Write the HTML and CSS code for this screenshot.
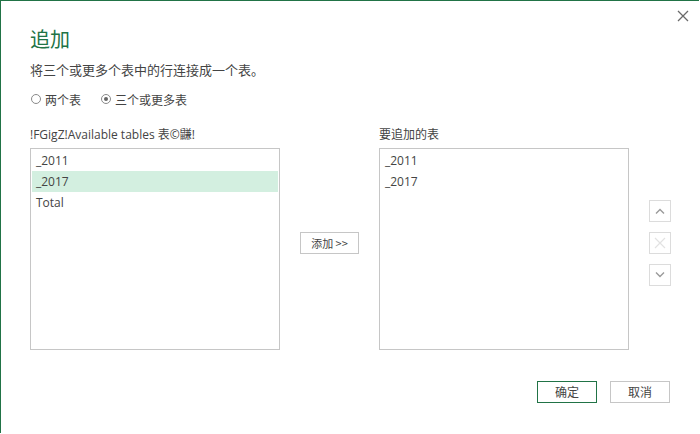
FILE: index.html
```html
<!DOCTYPE html>
<html lang="zh-CN">
<head>
    <meta charset="UTF-8">
    <title>追加</title>
    <link rel="stylesheet" href="styles.css">
</head>
<body>
    <div class="dialog">
        <button class="close" aria-label="关闭">
            <svg width="14" height="14" viewBox="0 0 14 14"><path d="M2 2 L12 12 M12 2 L2 12" stroke="#6a6a6a" stroke-width="1.3" fill="none"/></svg>
        </button>

        <h1 class="title">追加</h1>
        <p class="subtitle">将三个或更多个表中的行连接成一个表。</p>

        <div class="radios">
            <label class="radio"><span class="dot"></span>两个表</label>
            <label class="radio"><span class="dot checked"></span>三个或更多表</label>
        </div>

        <div class="main">
            <div class="col">
                <div class="col-label">!FGigZ!Available tables 表©鼸!</div>
                <ul class="list">
                    <li>_2011</li>
                    <li class="selected">_2017</li>
                    <li>Total</li>
                </ul>
            </div>
            <div class="mid">
                <button class="btn add">添加 &gt;&gt;</button>
            </div>
            <div class="col">
                <div class="col-label">要追加的表</div>
                <ul class="list">
                    <li>_2011</li>
                    <li>_2017</li>
                </ul>
            </div>
            <div class="side">
                <button class="icon-btn">
                    <svg width="10" height="6" viewBox="0 0 10 6"><path d="M1 5.5 L5 1.5 L9 5.5" stroke="#9a9a9a" stroke-width="1.4" fill="none"/></svg>
                </button>
                <button class="icon-btn">
                    <svg width="12" height="12" viewBox="0 0 12 12"><path d="M1 1 L11 11 M11 1 L1 11" stroke="#e2e2e2" stroke-width="1.2" fill="none"/></svg>
                </button>
                <button class="icon-btn">
                    <svg width="10" height="6" viewBox="0 0 10 6"><path d="M1 0.5 L5 4.5 L9 0.5" stroke="#9a9a9a" stroke-width="1.4" fill="none"/></svg>
                </button>
            </div>
        </div>

        <div class="footer">
            <button class="btn ok">确定</button>
            <button class="btn">取消</button>
        </div>
    </div>
</body>
</html>
```

FILE: styles.css
```css
html, body {
    margin: 0;
    padding: 0;
    background: white;
}
body {
    font-family: "Open Sans", "Noto Sans CJK SC", sans-serif;
    font-size: 12px;
    color: #444;
}
.dialog {
    position: relative;
    width: 699px;
    height: 433px;
    border-top: 1px solid #217346;
    border-left: 1px solid #217346;
    padding: 0 29px 0 29px;
    box-sizing: border-box;
    background: white;
}
.close {
    position: absolute;
    top: 4px;
    right: 4px;
    width: 24px;
    height: 22px;
    padding: 0;
    border: none;
    background: none;
    display: flex;
    align-items: center;
    justify-content: center;
}
.title {
    margin: 0;
    padding-top: 24px;
    font-size: 20px;
    font-weight: normal;
    line-height: 28px;
    color: #217346;
    font-family: "Noto Sans CJK SC", sans-serif;
}
.subtitle {
    margin: 7px 0 0 0;
    font-size: 13px;
    line-height: 20px;
    color: #444;
    font-family: "Noto Sans CJK SC", sans-serif;
}
.radios {
    display: flex;
    gap: 19px;
    margin-top: 9px;
    height: 20px;
    align-items: center;
}
.radio {
    display: flex;
    align-items: center;
    gap: 4px;
    font-size: 12px;
    font-family: "Noto Sans CJK SC", sans-serif;
}
.dot {
    width: 10px;
    height: 10px;
    border: 1px solid #8a8a8a;
    border-radius: 50%;
    box-sizing: border-box;
    position: relative;
    margin-left: 1px;
}
.dot.checked::after {
    content: "";
    position: absolute;
    left: 2px;
    top: 2px;
    width: 4px;
    height: 4px;
    border-radius: 50%;
    background: #666;
}
.main {
    display: grid;
    grid-template-columns: 250px 59px 250px 22px;
    column-gap: 20px;
    margin-top: 16px;
}
.col-label {
    height: 20px;
    line-height: 20px;
    font-size: 12px;
    margin-bottom: 3px;
}
.list {
    list-style: none;
    margin: 0;
    padding: 1px;
    height: 202px;
    box-sizing: border-box;
    border: 1px solid #c6c6c6;
}
.list li {
    height: 21px;
    line-height: 21px;
    padding-left: 4px;
    font-size: 12px;
}
.list li.selected {
    background: #d3efe0;
}
.mid {
    padding-top: 107px;
}
.btn {
    width: 60px;
    height: 22px;
    padding: 0;
    border: 1px solid #c6c6c6;
    background: white;
    color: #444;
    font-family: "Noto Sans CJK SC", sans-serif;
    font-size: 12px;
    line-height: 20px;
}
.btn.add {
    width: 59px;
    font-size: 11px;
}
.btn.ok {
    border-color: #217346;
}
.side {
    display: flex;
    flex-direction: column;
    gap: 10px;
    padding-top: 75px;
}
.icon-btn {
    width: 22px;
    height: 22px;
    padding: 0;
    border: 1px solid #dcdcdc;
    background: white;
    display: flex;
    align-items: center;
    justify-content: center;
}
.footer {
    display: flex;
    justify-content: flex-end;
    gap: 13px;
    margin-top: 31px;
}
```
